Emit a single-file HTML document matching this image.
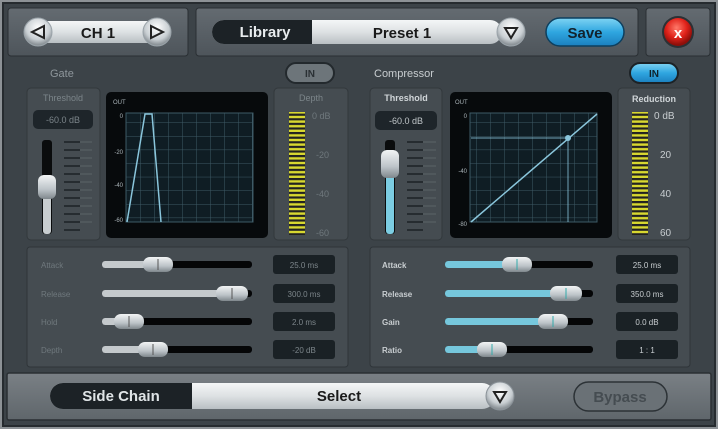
<!DOCTYPE html>
<html><head><meta charset="utf-8"><style>
html,body{margin:0;padding:0;background:#3c4348;}
svg{display:block;font-family:"Liberation Sans",sans-serif;}
</style></head><body>
<svg width="718" height="429" viewBox="0 0 718 429" xmlns="http://www.w3.org/2000/svg">
<defs>
<linearGradient id="panel" x1="0" y1="0" x2="0" y2="1"><stop offset="0" stop-color="#646b71"/><stop offset="1" stop-color="#4e555b"/></linearGradient>
<linearGradient id="white" x1="0" y1="0" x2="0" y2="1"><stop offset="0" stop-color="#f4f6f7"/><stop offset="0.5" stop-color="#dde1e3"/><stop offset="1" stop-color="#b9bfc3"/></linearGradient>
<linearGradient id="blue" x1="0" y1="0" x2="0" y2="1"><stop offset="0" stop-color="#7fd4f3"/><stop offset="0.5" stop-color="#2fa6e0"/><stop offset="1" stop-color="#1b7fbe"/></linearGradient>
<radialGradient id="red" cx="0.45" cy="0.35" r="0.6"><stop offset="0" stop-color="#ff7a6a"/><stop offset="0.6" stop-color="#e0221a"/><stop offset="1" stop-color="#8f0f0a"/></radialGradient>
<radialGradient id="knob" cx="0.5" cy="0.35" r="0.6"><stop offset="0" stop-color="#ffffff"/><stop offset="0.7" stop-color="#c9cfd3"/><stop offset="1" stop-color="#8c9398"/></radialGradient>
<linearGradient id="thumb" x1="0" y1="0" x2="0" y2="1"><stop offset="0" stop-color="#f2f4f5"/><stop offset="0.6" stop-color="#bcc3c8"/><stop offset="1" stop-color="#7f878c"/></linearGradient>
<linearGradient id="bot" x1="0" y1="0" x2="0" y2="1"><stop offset="0" stop-color="#7a8085"/><stop offset="1" stop-color="#5f666b"/></linearGradient>
<pattern id="meter" width="16" height="4.6" patternUnits="userSpaceOnUse"><rect width="16" height="4.6" fill="#222"/><rect y="0.8" width="16" height="2.4" fill="#d8d830"/></pattern>
<pattern id="grid" width="14" height="13.6" patternUnits="userSpaceOnUse"><rect width="14" height="13.6" fill="#0f1d24"/><path d="M0 0V13.6M0 0H14" stroke="#3e5a66" stroke-width="1"/></pattern>
</defs>
<rect width="718" height="429" fill="#3c4348"/>
<rect x="0.5" y="0.5" width="717" height="428" fill="none" stroke="#8d9296" stroke-width="3"/>
<rect x="3" y="3" width="712" height="423" fill="none" stroke="#262b2f" stroke-width="2"/>

<!-- top panels -->
<rect x="8" y="8" width="180" height="48" rx="3" fill="url(#panel)" stroke="#2a2f33"/>
<rect x="196" y="8" width="442" height="48" rx="3" fill="url(#panel)" stroke="#2a2f33"/>
<rect x="646" y="8" width="64" height="48" rx="3" fill="url(#panel)" stroke="#2a2f33"/>

<!-- CH -->
<rect x="40" y="21" width="110" height="22" fill="url(#white)"/>
<circle cx="38" cy="32" r="14" fill="url(#knob)" stroke="#9aa3a9"/>
<path d="M44 26 L32 32 L44 38 Z" fill="none" stroke="#222" stroke-width="2"/>
<circle cx="157" cy="32" r="14" fill="url(#knob)" stroke="#9aa3a9"/>
<path d="M151 26 L163 32 L151 38 Z" fill="none" stroke="#222" stroke-width="2"/>
<text x="98" y="38" font-size="15" font-weight="bold" fill="#1a1a1a" text-anchor="middle">CH 1</text>

<!-- Library -->
<rect x="212" y="20" width="290" height="24" rx="12" fill="url(#white)"/>
<path d="M224 20 H312 V44 H224 A12 12 0 0 1 224 20Z" fill="#1c2226"/>
<text x="265" y="37" font-size="15" font-weight="bold" fill="#e8ecee" text-anchor="middle">Library</text>
<text x="402" y="38" font-size="15" font-weight="bold" fill="#1a1a1a" text-anchor="middle">Preset 1</text>
<circle cx="511" cy="32" r="14" fill="url(#knob)" stroke="#9aa3a9"/>
<path d="M505 28 H517 L511 38 Z" fill="none" stroke="#222" stroke-width="2"/>
<rect x="546" y="18" width="78" height="28" rx="14" fill="url(#blue)" stroke="#0d3f5e" stroke-width="1.5"/>
<text x="585" y="38" font-size="15" font-weight="bold" fill="#12222c" text-anchor="middle">Save</text>
<circle cx="678" cy="32" r="16" fill="#2c3135"/>
<circle cx="678" cy="32" r="14" fill="url(#red)"/>
<text x="678" y="38" font-size="15" font-weight="bold" fill="#fff" text-anchor="middle">x</text>

<!-- section labels -->
<text x="50" y="77" font-size="11" fill="#8e969b">Gate</text>
<rect x="286" y="63" width="48" height="20" rx="10" fill="#6d757a" stroke="#23292d" stroke-width="2"/>
<text x="310" y="77" font-size="10" font-weight="bold" fill="#2a3034" text-anchor="middle">IN</text>
<text x="374" y="77" font-size="11" fill="#c8cdd0">Compressor</text>
<rect x="630" y="63" width="48" height="20" rx="10" fill="url(#blue)" stroke="#1c2226" stroke-width="2"/>
<text x="654" y="77" font-size="10" font-weight="bold" fill="#10202a" text-anchor="middle">IN</text>

<!-- Gate threshold -->
<rect x="27" y="88" width="73" height="152" rx="4" fill="#454c51" stroke="#32383c"/>
<text x="63" y="101" font-size="9" fill="#7c858a" text-anchor="middle">Threshold</text>
<rect x="33" y="110" width="60" height="19" rx="5" fill="#1e252a"/>
<text x="63" y="123" font-size="9" fill="#7c858a" text-anchor="middle">-60.0 dB</text>
<rect x="42" y="140" width="10" height="94" rx="3" fill="#0a0c0d"/>
<rect x="43" y="180" width="8" height="54" rx="3" fill="#c8cdd0"/>
<rect x="38" y="175" width="18" height="24" rx="6" fill="url(#thumb)"/>
<g stroke="#1c2226" stroke-width="1.6">
<path d="M64 142H80M64 150H80M64 158H80M64 166H80M64 174H80M64 182H80M64 190H80M64 198H80M64 206H80M64 214H80M64 222H80M64 230H80"/></g>
<g stroke="#5c6468" stroke-width="1"><path d="M80 142H92M80 150H92M80 158H92M80 166H92M80 174H92M80 182H92M80 190H92M80 198H92M80 206H92M80 214H92M80 222H92"/></g>

<!-- Gate graph -->
<rect x="106" y="92" width="162" height="146" rx="5" fill="#070a0c"/>
<rect x="126" y="113" width="127" height="109" fill="url(#grid)"/>
<rect x="126" y="113" width="127" height="109" fill="none" stroke="#3e5a66"/>
<text x="113" y="104" font-size="6" fill="#aab4b9">OUT</text>
<g font-size="6" fill="#aab4b9" text-anchor="end"><text x="123" y="118">0</text><text x="123" y="154">-20</text><text x="123" y="187">-40</text><text x="123" y="222">-60</text></g>
<path d="M127 222 L145 114 L152 114 L161 222" fill="none" stroke="#8ac6dc" stroke-width="1.5"/>

<!-- Depth -->
<rect x="274" y="88" width="74" height="152" rx="4" fill="#454c51" stroke="#32383c"/>
<text x="311" y="101" font-size="9" fill="#7c858a" text-anchor="middle">Depth</text>
<rect x="289" y="112" width="16" height="123" fill="url(#meter)"/>
<g font-size="9" fill="#6f787d"><text x="312" y="119">0 dB</text><text x="316" y="158">-20</text><text x="316" y="197">-40</text><text x="316" y="236">-60</text></g>

<!-- Comp threshold -->
<rect x="370" y="88" width="72" height="152" rx="4" fill="#454c51" stroke="#32383c"/>
<text x="406" y="101" font-size="9" font-weight="bold" fill="#d0d5d8" text-anchor="middle">Threshold</text>
<rect x="375" y="111" width="62" height="19" rx="5" fill="#1e252a"/>
<text x="406" y="124" font-size="9" fill="#c0c6c9" text-anchor="middle">-60.0 dB</text>
<rect x="385" y="140" width="10" height="94" rx="3" fill="#0a0c0d"/>
<rect x="386" y="160" width="8" height="74" rx="3" fill="#7ccde2"/>
<rect x="381" y="150" width="18" height="28" rx="6" fill="url(#thumb)"/>
<g stroke="#1c2226" stroke-width="1.6"><path d="M407 142H423M407 150H423M407 158H423M407 166H423M407 174H423M407 182H423M407 190H423M407 198H423M407 206H423M407 214H423M407 222H423M407 230H423"/></g>
<g stroke="#5c6468"><path d="M423 142H436M423 150H436M423 158H436M423 166H436M423 174H436M423 182H436M423 190H436M423 198H436M423 206H436M423 214H436M423 222H436"/></g>

<!-- Comp graph -->
<rect x="450" y="92" width="162" height="146" rx="5" fill="#070a0c"/>
<rect x="470" y="113" width="127" height="109" fill="url(#grid)"/>
<rect x="470" y="113" width="127" height="109" fill="none" stroke="#3e5a66"/>
<text x="455" y="104" font-size="6" fill="#aab4b9">OUT</text>
<g font-size="6" fill="#aab4b9" text-anchor="end"><text x="467" y="118">0</text><text x="467" y="173">-40</text><text x="467" y="226">-80</text></g>
<path d="M471 222 L597 114" stroke="#8ac6dc" stroke-width="1.5"/>
<path d="M471 138 L568 138 M568 138 V222" stroke="#8ac6dc" stroke-width="1" opacity="0.8"/>
<circle cx="568" cy="138" r="3" fill="#8ac6dc"/>

<!-- Reduction -->
<rect x="618" y="88" width="72" height="152" rx="4" fill="#454c51" stroke="#32383c"/>
<text x="654" y="102" font-size="9" font-weight="bold" fill="#d0d5d8" text-anchor="middle">Reduction</text>
<rect x="632" y="112" width="16" height="123" fill="url(#meter)"/>
<g font-size="10" fill="#c8cdd0"><text x="654" y="119">0 dB</text><text x="660" y="158">20</text><text x="660" y="197">40</text><text x="660" y="236">60</text></g>

<!-- lower panels -->
<rect x="27" y="247" width="321" height="120" rx="3" fill="#454c51" stroke="#2f3539"/>
<rect x="370" y="247" width="320" height="120" rx="3" fill="#454c51" stroke="#2f3539"/>

<g font-size="8" fill="#6f787d">
<text x="41" y="268">Attack</text><text x="41" y="297">Release</text><text x="41" y="325">Hold</text><text x="41" y="353">Depth</text></g>
<g font-size="8" font-weight="bold" fill="#c8cdd0">
<text x="382" y="268">Attack</text><text x="382" y="297">Release</text><text x="382" y="325">Gain</text><text x="382" y="353">Ratio</text></g>

<!-- left sliders -->
<g>
<rect x="102" y="261" width="150" height="7" rx="3" fill="#050607"/><rect x="102" y="261" width="55" height="7" rx="3" fill="#c4c9cc"/><rect x="143" y="257" width="30" height="15" rx="7" fill="url(#thumb)"/><path d="M158 259V270" stroke="#555"/>
<rect x="102" y="290" width="150" height="7" rx="3" fill="#050607"/><rect x="102" y="290" width="128" height="7" rx="3" fill="#c4c9cc"/><rect x="216" y="286" width="32" height="15" rx="7" fill="url(#thumb)"/><path d="M232 288V299" stroke="#555"/>
<rect x="102" y="318" width="150" height="7" rx="3" fill="#050607"/><rect x="102" y="318" width="26" height="7" rx="3" fill="#c4c9cc"/><rect x="114" y="314" width="30" height="15" rx="7" fill="url(#thumb)"/><path d="M129 316V327" stroke="#555"/>
<rect x="102" y="346" width="150" height="7" rx="3" fill="#050607"/><rect x="102" y="346" width="50" height="7" rx="3" fill="#c4c9cc"/><rect x="138" y="342" width="30" height="15" rx="7" fill="url(#thumb)"/><path d="M153 344V355" stroke="#555"/>
</g>
<!-- right sliders -->
<g>
<rect x="445" y="261" width="148" height="7" rx="3" fill="#050607"/><rect x="445" y="261" width="72" height="7" rx="3" fill="#76c7dc"/><rect x="502" y="257" width="30" height="15" rx="7" fill="url(#thumb)"/><path d="M517 259V270" stroke="#3aa"/>
<rect x="445" y="290" width="148" height="7" rx="3" fill="#050607"/><rect x="445" y="290" width="120" height="7" rx="3" fill="#76c7dc"/><rect x="550" y="286" width="32" height="15" rx="7" fill="url(#thumb)"/><path d="M566 288V299" stroke="#3aa"/>
<rect x="445" y="318" width="148" height="7" rx="3" fill="#050607"/><rect x="445" y="318" width="108" height="7" rx="3" fill="#76c7dc"/><rect x="538" y="314" width="30" height="15" rx="7" fill="url(#thumb)"/><path d="M553 316V327" stroke="#3aa"/>
<rect x="445" y="346" width="148" height="7" rx="3" fill="#050607"/><rect x="445" y="346" width="47" height="7" rx="3" fill="#76c7dc"/><rect x="477" y="342" width="30" height="15" rx="7" fill="url(#thumb)"/><path d="M492 344V355" stroke="#3aa"/>
</g>

<!-- value boxes -->
<g fill="#1a2125">
<rect x="273" y="255" width="62" height="19" rx="3"/><rect x="273" y="284" width="62" height="19" rx="3"/><rect x="273" y="312" width="62" height="19" rx="3"/><rect x="273" y="340" width="62" height="19" rx="3"/>
<rect x="616" y="255" width="62" height="19" rx="3"/><rect x="616" y="284" width="62" height="19" rx="3"/><rect x="616" y="312" width="62" height="19" rx="3"/><rect x="616" y="340" width="62" height="19" rx="3"/>
</g>
<g font-size="8" fill="#7c858a" text-anchor="middle">
<text x="304" y="268">25.0 ms</text><text x="304" y="297">300.0 ms</text><text x="304" y="325">2.0 ms</text><text x="304" y="353">-20 dB</text></g>
<g font-size="8" fill="#c8cdd0" text-anchor="middle">
<text x="647" y="268">25.0 ms</text><text x="647" y="297">350.0 ms</text><text x="647" y="325">0.0 dB</text><text x="647" y="353">1 : 1</text></g>

<!-- bottom bar -->
<rect x="7" y="373" width="704" height="47" rx="2" fill="url(#bot)" stroke="#2a2f33" stroke-width="1.5"/>
<rect x="50" y="383" width="445" height="26" rx="13" fill="url(#white)"/>
<path d="M63 383 H192 V409 H63 A13 13 0 0 1 63 383Z" fill="#1c2226"/>
<text x="121" y="401" font-size="15" font-weight="bold" fill="#dfe4e6" text-anchor="middle">Side Chain</text>
<text x="339" y="401" font-size="15" font-weight="bold" fill="#1a1a1a" text-anchor="middle">Select</text>
<circle cx="500" cy="396" r="14" fill="url(#knob)" stroke="#8a9298"/>
<path d="M494 392 H506 L500 402 Z" fill="none" stroke="#222" stroke-width="2"/>
<rect x="574" y="382" width="93" height="29" rx="14.5" fill="#6a7176" stroke="#2c3236" stroke-width="1.5"/>
<text x="620" y="402" font-size="15" font-weight="bold" fill="#454c51" text-anchor="middle">Bypass</text>
</svg>
</body></html>
